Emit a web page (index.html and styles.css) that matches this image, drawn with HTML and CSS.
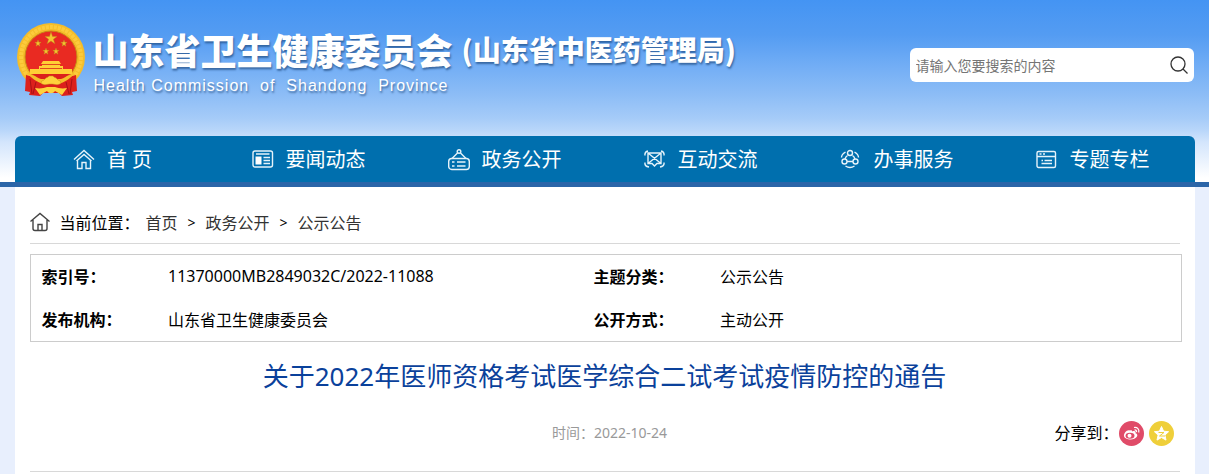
FILE: index.html
```html
<!DOCTYPE html>
<html lang="zh-CN">
<head>
  <meta charset="UTF-8" />
  <meta name="viewport" content="width=device-width, initial-scale=1" />
  <title>山东省卫生健康委员会</title>
  <link rel="stylesheet" href="styles.css">
</head>
<body>

  <!-- 头部 -->
  <header class="header">
    <div class="wrap header-top">
      <svg class="emblem" viewBox="0 0 70 74" aria-hidden="true">
        <circle cx="34" cy="34" r="34" fill="#f5bd2a"/>
        <circle cx="34" cy="34" r="30" fill="none" stroke="#fccb3c" stroke-width="4" stroke-dasharray="3 1"/>
        <circle cx="34" cy="34" r="26" fill="#e92a22" stroke="#c98a17" stroke-width="1"/>
        <g fill="#f5c531" stroke="#b98a18" stroke-width=".4">
          <path d="M34 9l1.500 4.400h4.600l-3.700 2.800 1.400 4.500-3.800-2.700-3.800 2.700 1.400-4.500-3.700-2.800h4.600z"/>
          <path d="M21 17l.8 2.300h2.400l-1.900 1.500.7 2.400-2-1.400-2 1.400.7-2.400-1.900-1.500h2.400z"/>
          <path d="M47 17l.8 2.300h2.400l-1.900 1.500.7 2.400-2-1.400-2 1.400.7-2.400-1.900-1.500h2.400z"/>
          <path d="M29 25l.8 2.300h2.400l-1.900 1.500.7 2.400-2-1.400-2 1.400.7-2.400-1.900-1.500h2.400z"/>
          <path d="M39 25l.8 2.300h2.400l-1.900 1.500.7 2.400-2-1.400-2 1.400.7-2.400-1.900-1.500h2.400z"/>
        </g>
        <path fill="#ffcf35" d="M26 38h16l2 3h-1v2h3v3h9v5H13v-5h9v-3h3v-2h-1z"/>
        <path stroke="#e04a1e" d="M25 41.500h18M23 45.500h22"/>
        <path fill="#dc201c" d="M9 52c5 1 10 3 15 6h20c5-3 10-5 15-6l1 16-5 1 1 3-11 1-3-3H26l-3 3-11-1 1-3-5-1z"/>
        <path fill="none" stroke="#a81116" d="M13 56l2 15M19 59l-3 12M55 56l-2 15M49 59l3 12"/>
        <path fill="#f5bd2a" d="M11 51c5 6 10 8 15 10h16c5-2 10-4 15-10l-8 2H19z"/>
        <path fill="#dc201c" d="M16 51h36c-3 3-5 4-8 5H24c-3-1-5-2-8-5z"/>
        <path fill="#ffd23c" stroke="#c98a17" stroke-width=".5" d="M24 60c0-3 3-2 4-4s3-1 4-3h4c1 2 3 1 4 3s4 1 4 4c-3 3-6 1-10 1s-7 2-10-1z"/>
        <path fill="#ffd23c" d="M18 65c5 1 9 0 12-1h8c3 1 7 2 12 1l-5 7-7-4c-2 3-6 3-8 0l-7 4z"/>
      </svg>
      <div class="brand">
        <div class="brand-names">
          <h1>山东省卫生健康委员会</h1>
          <h2>(山东省中医药管理局)</h2>
        </div>
        <div class="brand-en">Health Commission&nbsp; of&nbsp; Shandong&nbsp; Province</div>
      </div>
      <form class="search">
        <input type="text" name="q" aria-label="搜索" placeholder="请输入您要搜索的内容" />
        <button type="submit" aria-label="搜索">
          <svg width="18" height="18" viewBox="0 0 18 18" fill="none" stroke="#333" stroke-width="1.3"><circle cx="8" cy="8" r="7"/><path d="M13 13l4.500 4.500"/></svg>
        </button>
      </form>
    </div>

    <!-- 导航 -->
    <nav class="wrap nav">
      <a href="#">
        <svg viewBox="0 0 22 22"><path d="M1 10.500L11 1.500l10 9M3.500 12L11 5.500l7.500 6.500M4.500 11.500v8H9v-6h4v6h4.500v-8"/></svg>
        <span>首 页</span>
      </a>
      <a href="#">
        <svg viewBox="0 0 22 22"><rect x="1" y="2" width="19.500" height="16" rx="2"/><path d="M4 5h13.500M11.500 8.500H18M11.500 11.500H18M11.500 14.500H18"/><path class="solid" d="M3.500 7.500h6v8h-6z"/></svg>
        <span>要闻动态</span>
      </a>
      <a href="#">
        <svg viewBox="0 0 22 22"><rect x="0.700" y="9.500" width="20.600" height="11" rx="3"/><circle cx="11" cy="2.500" r="1.800"/><path d="M9.500 4L4 9.500M12.500 4L18 9.500M4 13h2.500M9 13h8.500M4 17h2.500M9 17h8.500"/></svg>
        <span>政务公开</span>
      </a>
      <a href="#">
        <svg viewBox="0 0 22 22"><path d="M4 4h13v10.500h-4L10.500 17 8 14.500H4zM4 4l13 10.500M17 4L4 14.500M1 6.500c-.5-3 1-4 3-4.500M20 6.500c.5-3-1-4-3-4.500M1 13.500c-.5 3 1 4 4 4.500M20 13.500c.5 3-1 4-4 4.500"/></svg>
        <span>互动交流</span>
      </a>
      <a href="#">
        <svg viewBox="0 0 22 22"><circle cx="10" cy="4" r="2.500"/><circle cx="4.500" cy="12.500" r="2.500"/><circle cx="15.500" cy="12.500" r="2.500"/><path d="M5.500 3C3 4.500 1.500 6.500 1.500 8.500M14.500 3C17 4.500 18.500 6.500 18.500 8.500M5.500 17c3 2 6 2 9 0M7 12.500h6M7.500 6.500C6 7.500 5.500 8.500 5 10M12.500 6.500c1.500 1 2 2 2.500 3.500"/></svg>
        <span>办事服务</span>
      </a>
      <a href="#">
        <svg viewBox="0 0 22 22"><rect x="1" y="2.500" width="18.500" height="16" rx="1.500"/><path d="M1 7.500h18.500M3.500 5h2M7 5h2M5.500 11.500H7M8.500 11.500H16M5.500 14.500H16"/></svg>
        <span>专题专栏</span>
      </a>
    </nav>
  </header>

  <!-- 正文 -->
  <main class="wrap main">
    <div class="crumbs">
      <svg class="crumb-home" viewBox="0 0 20 20"><path d="M.5 9.500L10 1.500l9.500 8M3 8v8.500a2 2 0 0 0 2 2h10a2 2 0 0 0 2-2V8M8 18v-5.500h4V18"/></svg>
      <span class="crumb-label">当前位置：</span>
      <a href="#">首页</a><i>&gt;</i><a href="#">政务公开</a><i>&gt;</i><a href="#">公示公告</a>
    </div>

    <table class="info">
      <tr>
        <th scope="row">索引号：</th>
        <td>11370000MB2849032C/2022-11088</td>
        <th scope="row">主题分类：</th>
        <td>公示公告</td>
      </tr>
      <tr>
        <th scope="row">发布机构：</th>
        <td>山东省卫生健康委员会</td>
        <th scope="row">公开方式：</th>
        <td>主动公开</td>
      </tr>
    </table>

    <h3 class="title">关于2022年医师资格考试医学综合二试考试疫情防控的通告</h3>

    <div class="meta">
      <span class="time">时间：2022-10-24</span>
      <div class="share">
        <span>分享到：</span>
        <a href="#" aria-label="新浪微博">
          <svg viewBox="0 0 25 25"><circle cx="12.500" cy="12.500" r="12.500" fill="#e04b68"/><path fill="#fff" d="M11 9.500c-3-1.500-6.500 3-6 5.500.5 4 10.500 5 13 .500 1-2-.5-3-1.500-3.300.8-2-1-2.700-3.500-1.700.3-1.200-.8-1.700-2-1z"/><ellipse cx="11" cy="14.700" rx="4.500" ry="3" fill="#e04b68"/><circle cx="10.500" cy="14.800" r="2" fill="#fff"/><path fill="none" stroke="#fff" stroke-width="1.200" d="M15.500 9c1.500-.2 2.300.8 2 2.200M15 6.500c3.500-.6 5.500 2 4.700 5"/></svg>
        </a>
        <a href="#" aria-label="QQ空间">
          <svg viewBox="0 0 25 25"><circle cx="12.500" cy="12.500" r="12.500" fill="#efcf3a"/><path fill="#fff" stroke="#fff" stroke-linejoin="round" d="M12.500 5.500l2.100 4.700 5 .5-3.700 3.400 1.100 5-4.500-2.600L8 19.100l1.100-5-3.700-3.400 5-.5z"/><path fill="none" stroke="#efcf3a" stroke-width="1" d="M9.500 11.500h5.500l-4.500 3.500H16"/></svg>
        </a>
      </div>
    </div>
  </main>

</body>
</html>
```
FILE: styles.css
```css
* {
  box-sizing: border-box;
}

body {
  margin: 0;
  min-height: 100vh;
  display: flex;
  flex-direction: column;
  background: #e8effd;
  color: #000;
  font-family: "Noto Sans", "Noto Sans CJK SC", sans-serif;
  font-size: 16px;
}

h1, h2, h3 {
  margin: 0;
}

a {
  color: #333;
  text-decoration: none;
}

.wrap {
  width: calc(100% - 29px);
  max-width: 1180px;
  margin: 0 auto;
}

/* 头部 */
.header {
  border-bottom: 5px solid #2b65a8;
  background: linear-gradient(#4494f3 0, #549cf2 35px, #71adf5 65px, #8dbdf6 95px, #a5cbf8 118px, #b8d6fa 130px, #d3e5fc 142px, #fff 178px);
}

.header-top {
  display: flex;
  height: 136px;
  padding: 23px 1px 0 2px;
}

.emblem {
  width: 70px;
  height: 74px;
  margin-right: 6px;
}

.brand {
  flex: 1;
  color: #fff;
  text-shadow: 1px 2px 2px rgba(20, 60, 110, 0.6);
  white-space: nowrap;
}

.brand-names {
  display: flex;
  align-items: center;
  gap: 9px;
  height: 52px;
  margin-bottom: 2px;
  font-family: "Noto Sans CJK SC", sans-serif;
}

.brand h1 {
  font-size: 36px;
  font-weight: 900;
  line-height: 50px;
}

.brand h2 {
  font-size: 28px;
  font-weight: 900;
  line-height: 50px;
}

.brand-en {
  padding-left: 1px;
  font: 16px/18px "Liberation Sans", Arial, sans-serif;
  letter-spacing: 1px;
}

.search {
  display: flex;
  width: 284px;
  height: 34px;
  margin-top: 25px;
  background: #fff;
  border-radius: 6px;
}

.search input {
  flex: 1;
  min-width: 0;
  padding: 0 6px;
  border: 0;
  background: none;
  font: inherit;
  font-size: 14px;
}

.search input::placeholder {
  color: #757575;
}

.search button {
  display: flex;
  align-items: center;
  padding: 0 6px;
  border: 0;
  background: none;
  cursor: pointer;
}

/* 导航 */
.nav {
  display: flex;
  height: 46px;
  padding-right: 4px;
  background: #006fae;
  border-radius: 6px 6px 0 0;
}

.nav a {
  flex: 1;
  display: flex;
  align-items: center;
  justify-content: center;
  gap: 12px;
  padding-top: 2px;
  color: #fff;
  font-size: 20px;
  line-height: 44px;
  white-space: nowrap;
}

.nav svg {
  width: 22px;
  height: 22px;
  fill: none;
  stroke: #e6f3fa;
  stroke-width: 1.4;
}

.nav .solid {
  fill: #fff;
  stroke: none;
}

/* 正文 */
.main {
  flex: 1;
  padding: 16px 15px 0;
  background: #fff;
}

.crumbs {
  display: flex;
  align-items: center;
  height: 41px;
  padding-bottom: 2px;
  border-bottom: 1px solid #d8d8d8;
}

.crumb-home {
  width: 20px;
  height: 20px;
  margin-right: 10px;
  fill: none;
  stroke: #444;
  stroke-width: 1.4;
}

.crumb-label {
  margin-right: 6px;
}

.crumbs i {
  width: 28px;
  font-size: 14px;
  font-style: normal;
  text-align: center;
}

.info {
  width: calc(100% + 2px);
  margin-top: 10px;
  border: 1px solid #ccc;
  border-spacing: 0;
  table-layout: fixed;
}

.info th,
.info td {
  height: 43px;
  padding: 0 0 1px 11px;
  text-align: left;
}

.info th {
  width: 11%;
}

.info td:nth-child(2) {
  width: 37%;
}

.title {
  margin-top: 16px;
  color: #0a419b;
  font-size: 26px;
  font-weight: 400;
  line-height: 36px;
  text-align: center;
}

.meta {
  display: grid;
  grid-template-columns: 1fr auto 1fr;
  align-items: center;
  height: 78px;
  padding-bottom: 2px;
  border-bottom: 1px solid #d8d8d8;
}

.time {
  grid-column: 2;
  padding-left: 10px;
  color: #999;
  font-size: 14px;
}

.share {
  display: flex;
  align-items: center;
  justify-content: flex-end;
  padding-right: 6px;
}

.share a {
  display: flex;
  margin-top: 4px;
}

.share a + a {
  margin-left: 5px;
}

.share svg {
  width: 25px;
  height: 25px;
}
```
